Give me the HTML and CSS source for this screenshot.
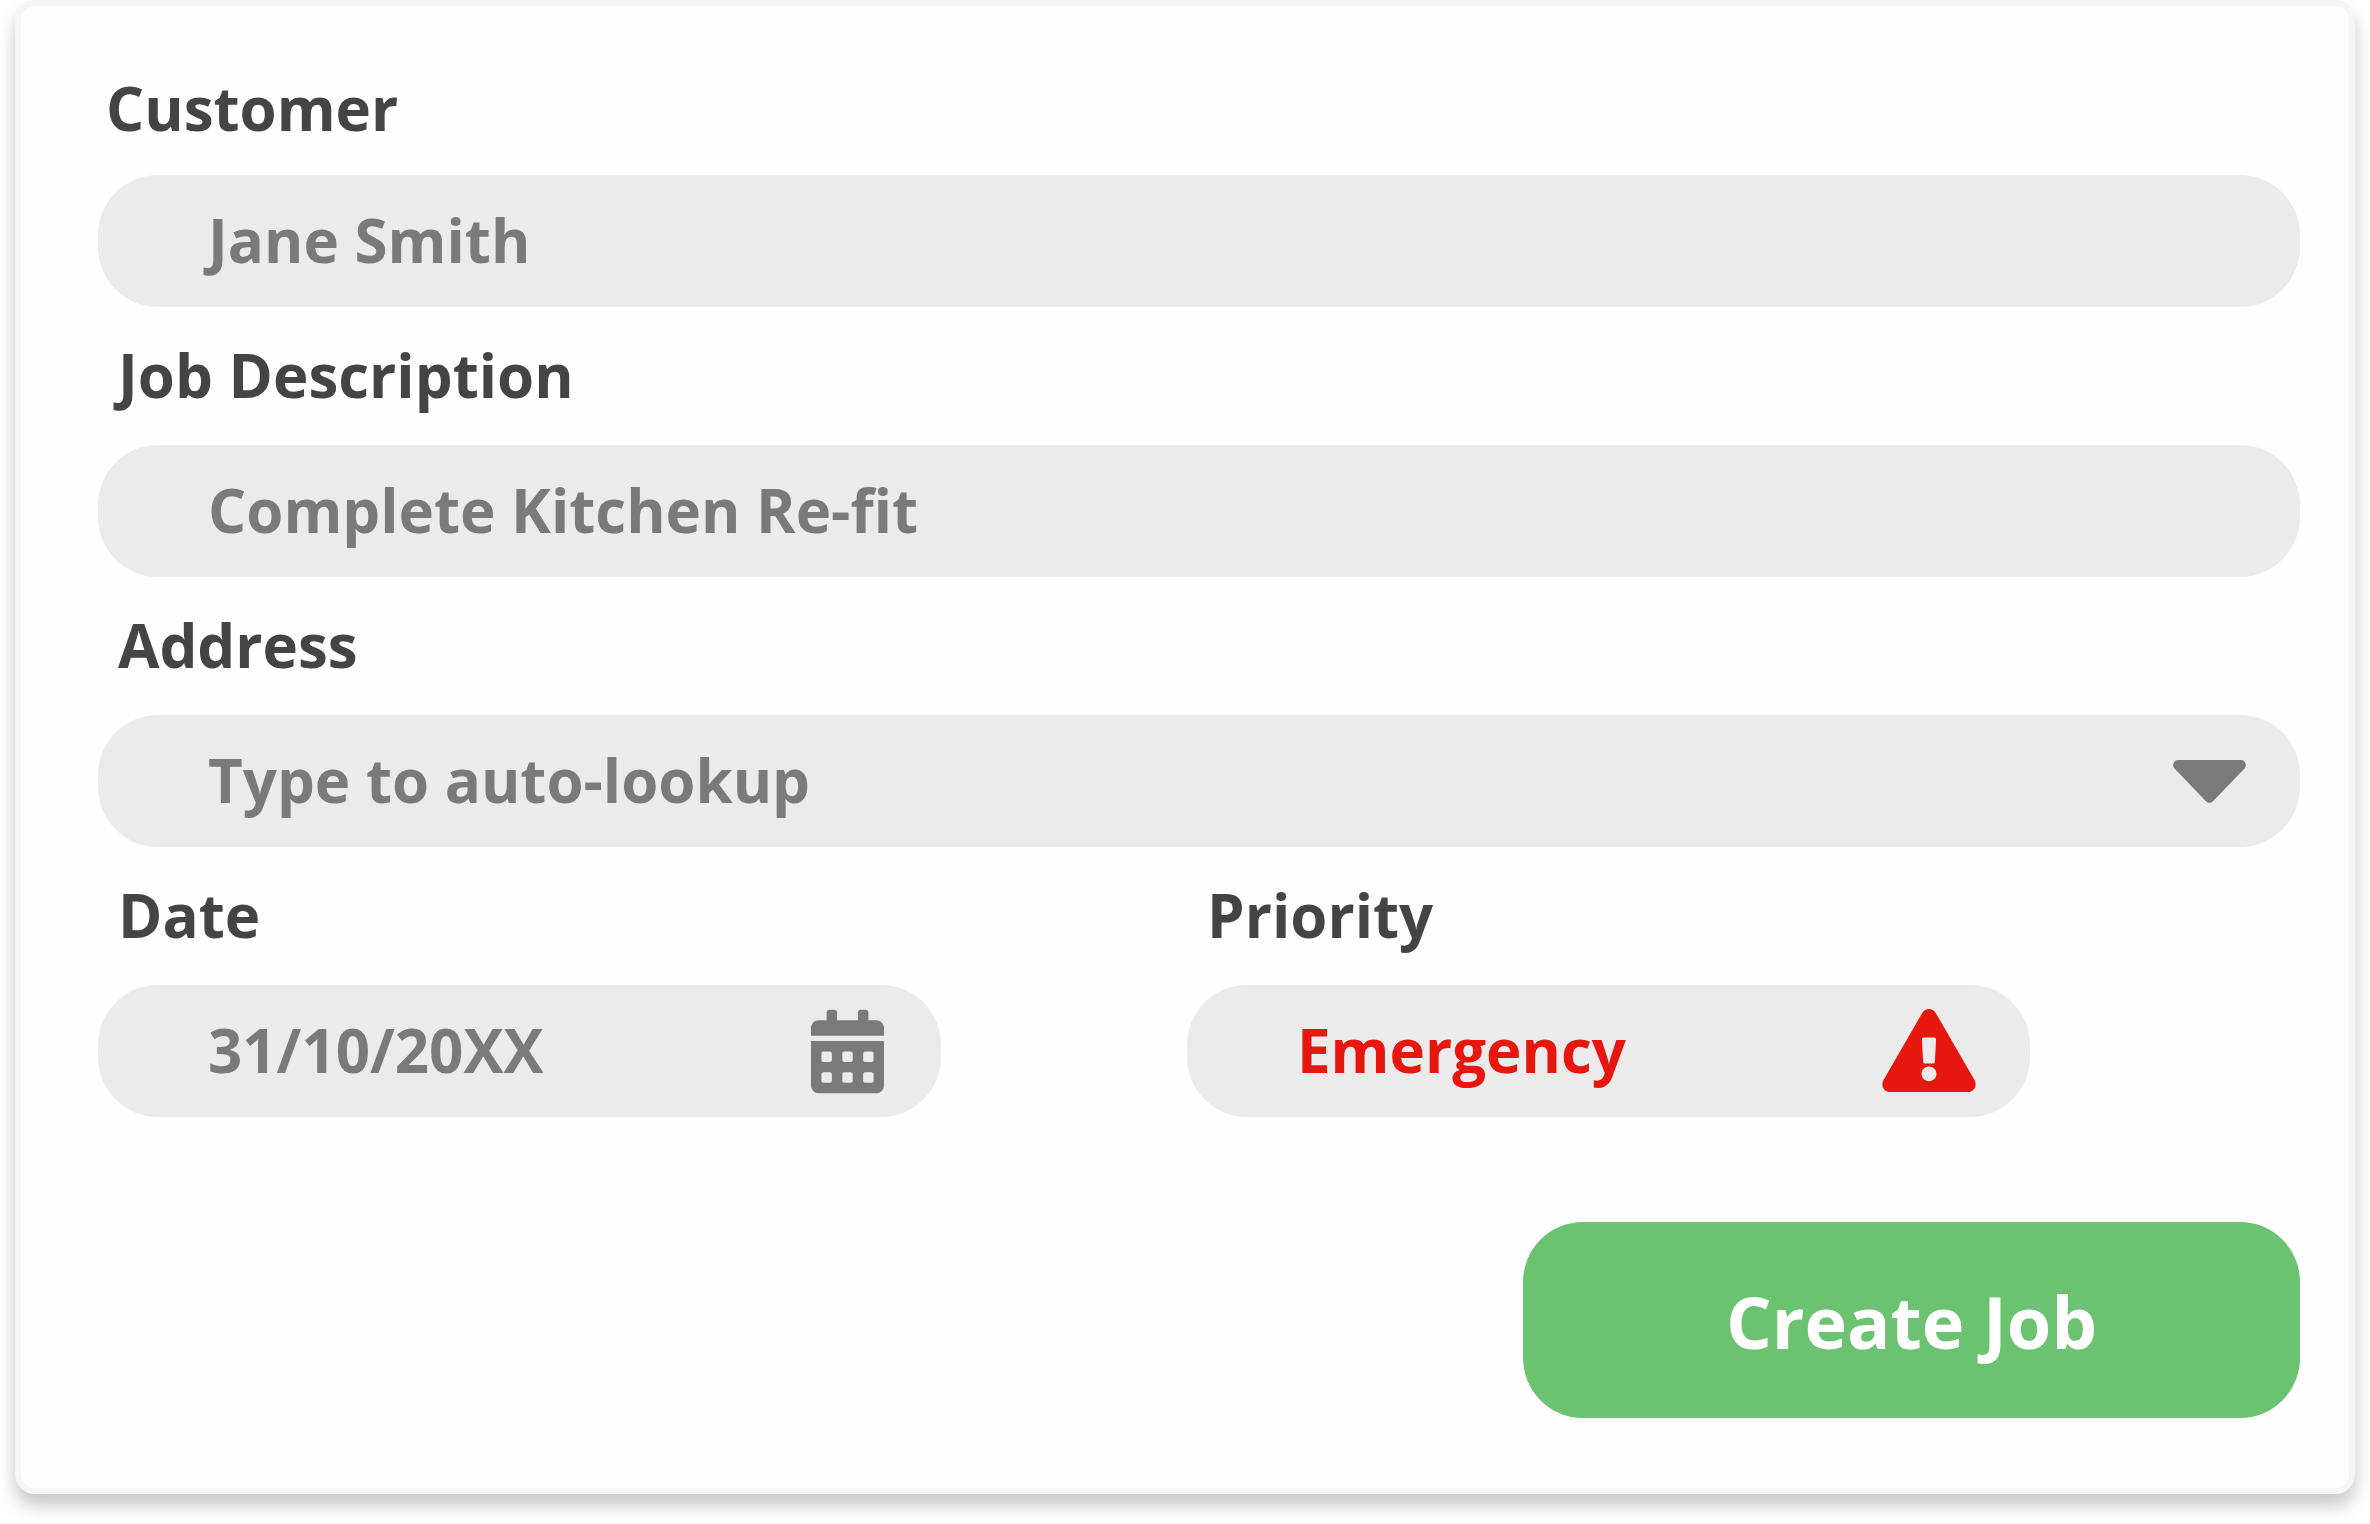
FILE: index.html
```
<!DOCTYPE html>
<html lang="en">
<head>
  <meta charset="UTF-8">
  <meta name="viewport" content="width=device-width, initial-scale=1">
  <title>Create Job</title>
  <link rel="stylesheet" href="styles.css">
</head>
<body>
<form class="card">
  <div class="field field-first">
    <label for="customer">Customer</label>
    <div class="control">
      <input type="text" id="customer" placeholder="Jane Smith">
    </div>
  </div>
  <div class="field">
    <label for="description">Job Description</label>
    <div class="control">
      <input type="text" id="description" placeholder="Complete Kitchen Re-fit">
    </div>
  </div>
  <div class="field">
    <label for="address">Address</label>
    <div class="control">
      <input type="text" id="address" placeholder="Type to auto-lookup">
      <svg class="icon-caret" viewBox="0 0 73 43" aria-hidden="true">
        <path d="M5 0H68C72 0 74.500 5 71.500 8.500L40.500 40.800C38 43.500 35 43.500 32.500 40.800L1.500 8.500C-1.500 5 1 0 5 0Z"/>
      </svg>
    </div>
  </div>
  <div class="row">
    <div class="field">
      <label for="date">Date</label>
      <div class="control">
        <input type="text" id="date" placeholder="31/10/20XX">
        <svg class="icon-calendar" viewBox="0 0 448 512" aria-hidden="true">
          <path fill-rule="evenodd" d="M0 464c0 26.500 21.500 48 48 48h352c26.500 0 48-21.500 48-48V192H0v272zM76 256h40c6.600 0 12 5.400 12 12v40c0 6.600-5.400 12-12 12H76c-6.600 0-12-5.400-12-12v-40c0-6.600 5.400-12 12-12zm128 0h40c6.600 0 12 5.400 12 12v40c0 6.600-5.400 12-12 12h-40c-6.600 0-12-5.400-12-12v-40c0-6.600 5.400-12 12-12zm128 0h40c6.600 0 12 5.400 12 12v40c0 6.600-5.400 12-12 12h-40c-6.600 0-12-5.400-12-12v-40c0-6.600 5.400-12 12-12zM76 384h40c6.600 0 12 5.400 12 12v40c0 6.600-5.400 12-12 12H76c-6.600 0-12-5.400-12-12v-40c0-6.600 5.400-12 12-12zm128 0h40c6.600 0 12 5.400 12 12v40c0 6.600-5.400 12-12 12h-40c-6.600 0-12-5.400-12-12v-40c0-6.600 5.400-12 12-12zm128 0h40c6.600 0 12 5.400 12 12v40c0 6.600-5.400 12-12 12h-40c-6.600 0-12-5.400-12-12v-40c0-6.600 5.400-12 12-12z"/>
          <path d="M400 64h-48V16c0-8.800-7.200-16-16-16h-32c-8.800 0-16 7.200-16 16v48H160V16c0-8.800-7.200-16-16-16h-32c-8.800 0-16 7.200-16 16v48H48C21.500 64 0 85.500 0 112v48h448v-48c0-26.500-21.500-48-48-48z"/>
        </svg>
      </div>
    </div>
    <div class="field">
      <label for="priority">Priority</label>
      <div class="control urgent">
        <select id="priority">
          <option>Emergency</option>
        </select>
        <svg class="icon-warning" viewBox="0 0 576 512" aria-hidden="true">
          <path fill-rule="evenodd" d="M569.517 440.013C587.975 472.007 564.806 512 527.940 512H48.054c-36.937 0-59.999-40.055-41.577-71.987L246.423 23.985c18.467-32.009 64.720-31.951 83.154 0l239.940 416.028zM288 354c-25.405 0-46 20.595-46 46s20.595 46 46 46 46-20.595 46-46-20.595-46-46-46zm-43.673-165.346l7.418 136c.347 6.364 5.609 11.346 11.982 11.346h48.546c6.373 0 11.635-4.982 11.982-11.346l7.418-136c.375-6.874-5.098-12.654-11.982-12.654h-63.383c-6.884 0-12.356 5.780-11.981 12.654z"/>
        </svg>
      </div>
    </div>
  </div>
  <div class="actions">
    <button type="button">Create Job</button>
  </div>
</form>
</body>
</html>
```
FILE: styles.css
```
:root {
  --label-color: #444;
  --muted: #7a7a7a;
  --field-bg: #ebebeb;
  --urgent: #e71710;
  --accent: #6bc270;
  --radius: 60px;
}
* { box-sizing: border-box; margin: 0; padding: 0; }
body {
  font-family: "Open Sans", sans-serif;
  font-size: 60px;
  font-weight: 700;
  line-height: 82px;
  color: var(--label-color);
  background: #fff;
}
.card {
  margin: 0 15px 30px;
  padding: 61px 49px 70px 77px;
  background: #fefefe;
  border: 6px solid #f5f5f5;
  border-radius: 20px;
  box-shadow: 0 12px 18px rgba(0, 0, 0, .22);
}
.field label {
  display: block;
  width: fit-content;
  margin: 27px 0 29px 20px;
}
.field-first label { margin: 0 0 26px 8px; }
.control {
  display: flex;
  align-items: center;
  height: 132px;
  padding-right: 54px;
  background: var(--field-bg);
  border-radius: var(--radius);
  color: var(--muted);
}
.control input,
.control select {
  flex: 1;
  min-width: 0;
  height: 100%;
  padding: 0 0 2px 110px;
  font: inherit;
  color: inherit;
  background: none;
  border: none;
  outline: none;
  appearance: none;
}
/* keep the tail of a leading J from being cut off */
.control input::placeholder { color: inherit; opacity: 1; }
.control input,
.control input::placeholder { overflow: visible; }
.control input { padding-left: 100px; text-indent: 10px; }
.control svg { flex: none; fill: currentColor; }
.urgent { color: var(--urgent); }
.icon-caret { width: 73px; height: 43px; }
.icon-calendar { width: 73px; height: 85px; margin-right: 3px; }
.icon-warning { width: 94px; height: 83px; margin-bottom: 2px; }
.row {
  display: grid;
  grid-template-columns: repeat(2, minmax(0, 1fr));
  gap: 246px;
  padding-right: 270px;
}
.actions {
  display: flex;
  justify-content: flex-end;
  margin-top: 105px;
}
.actions button {
  padding: 51px 203px 49px;
  font: inherit;
  font-size: 72px;
  line-height: 96px;
  color: #fff;
  background: var(--accent);
  border: none;
  border-radius: var(--radius);
  cursor: pointer;
}
@media (max-width: 1400px) {
  .row { grid-template-columns: 1fr; gap: 0; padding-right: 0; }
}
```
